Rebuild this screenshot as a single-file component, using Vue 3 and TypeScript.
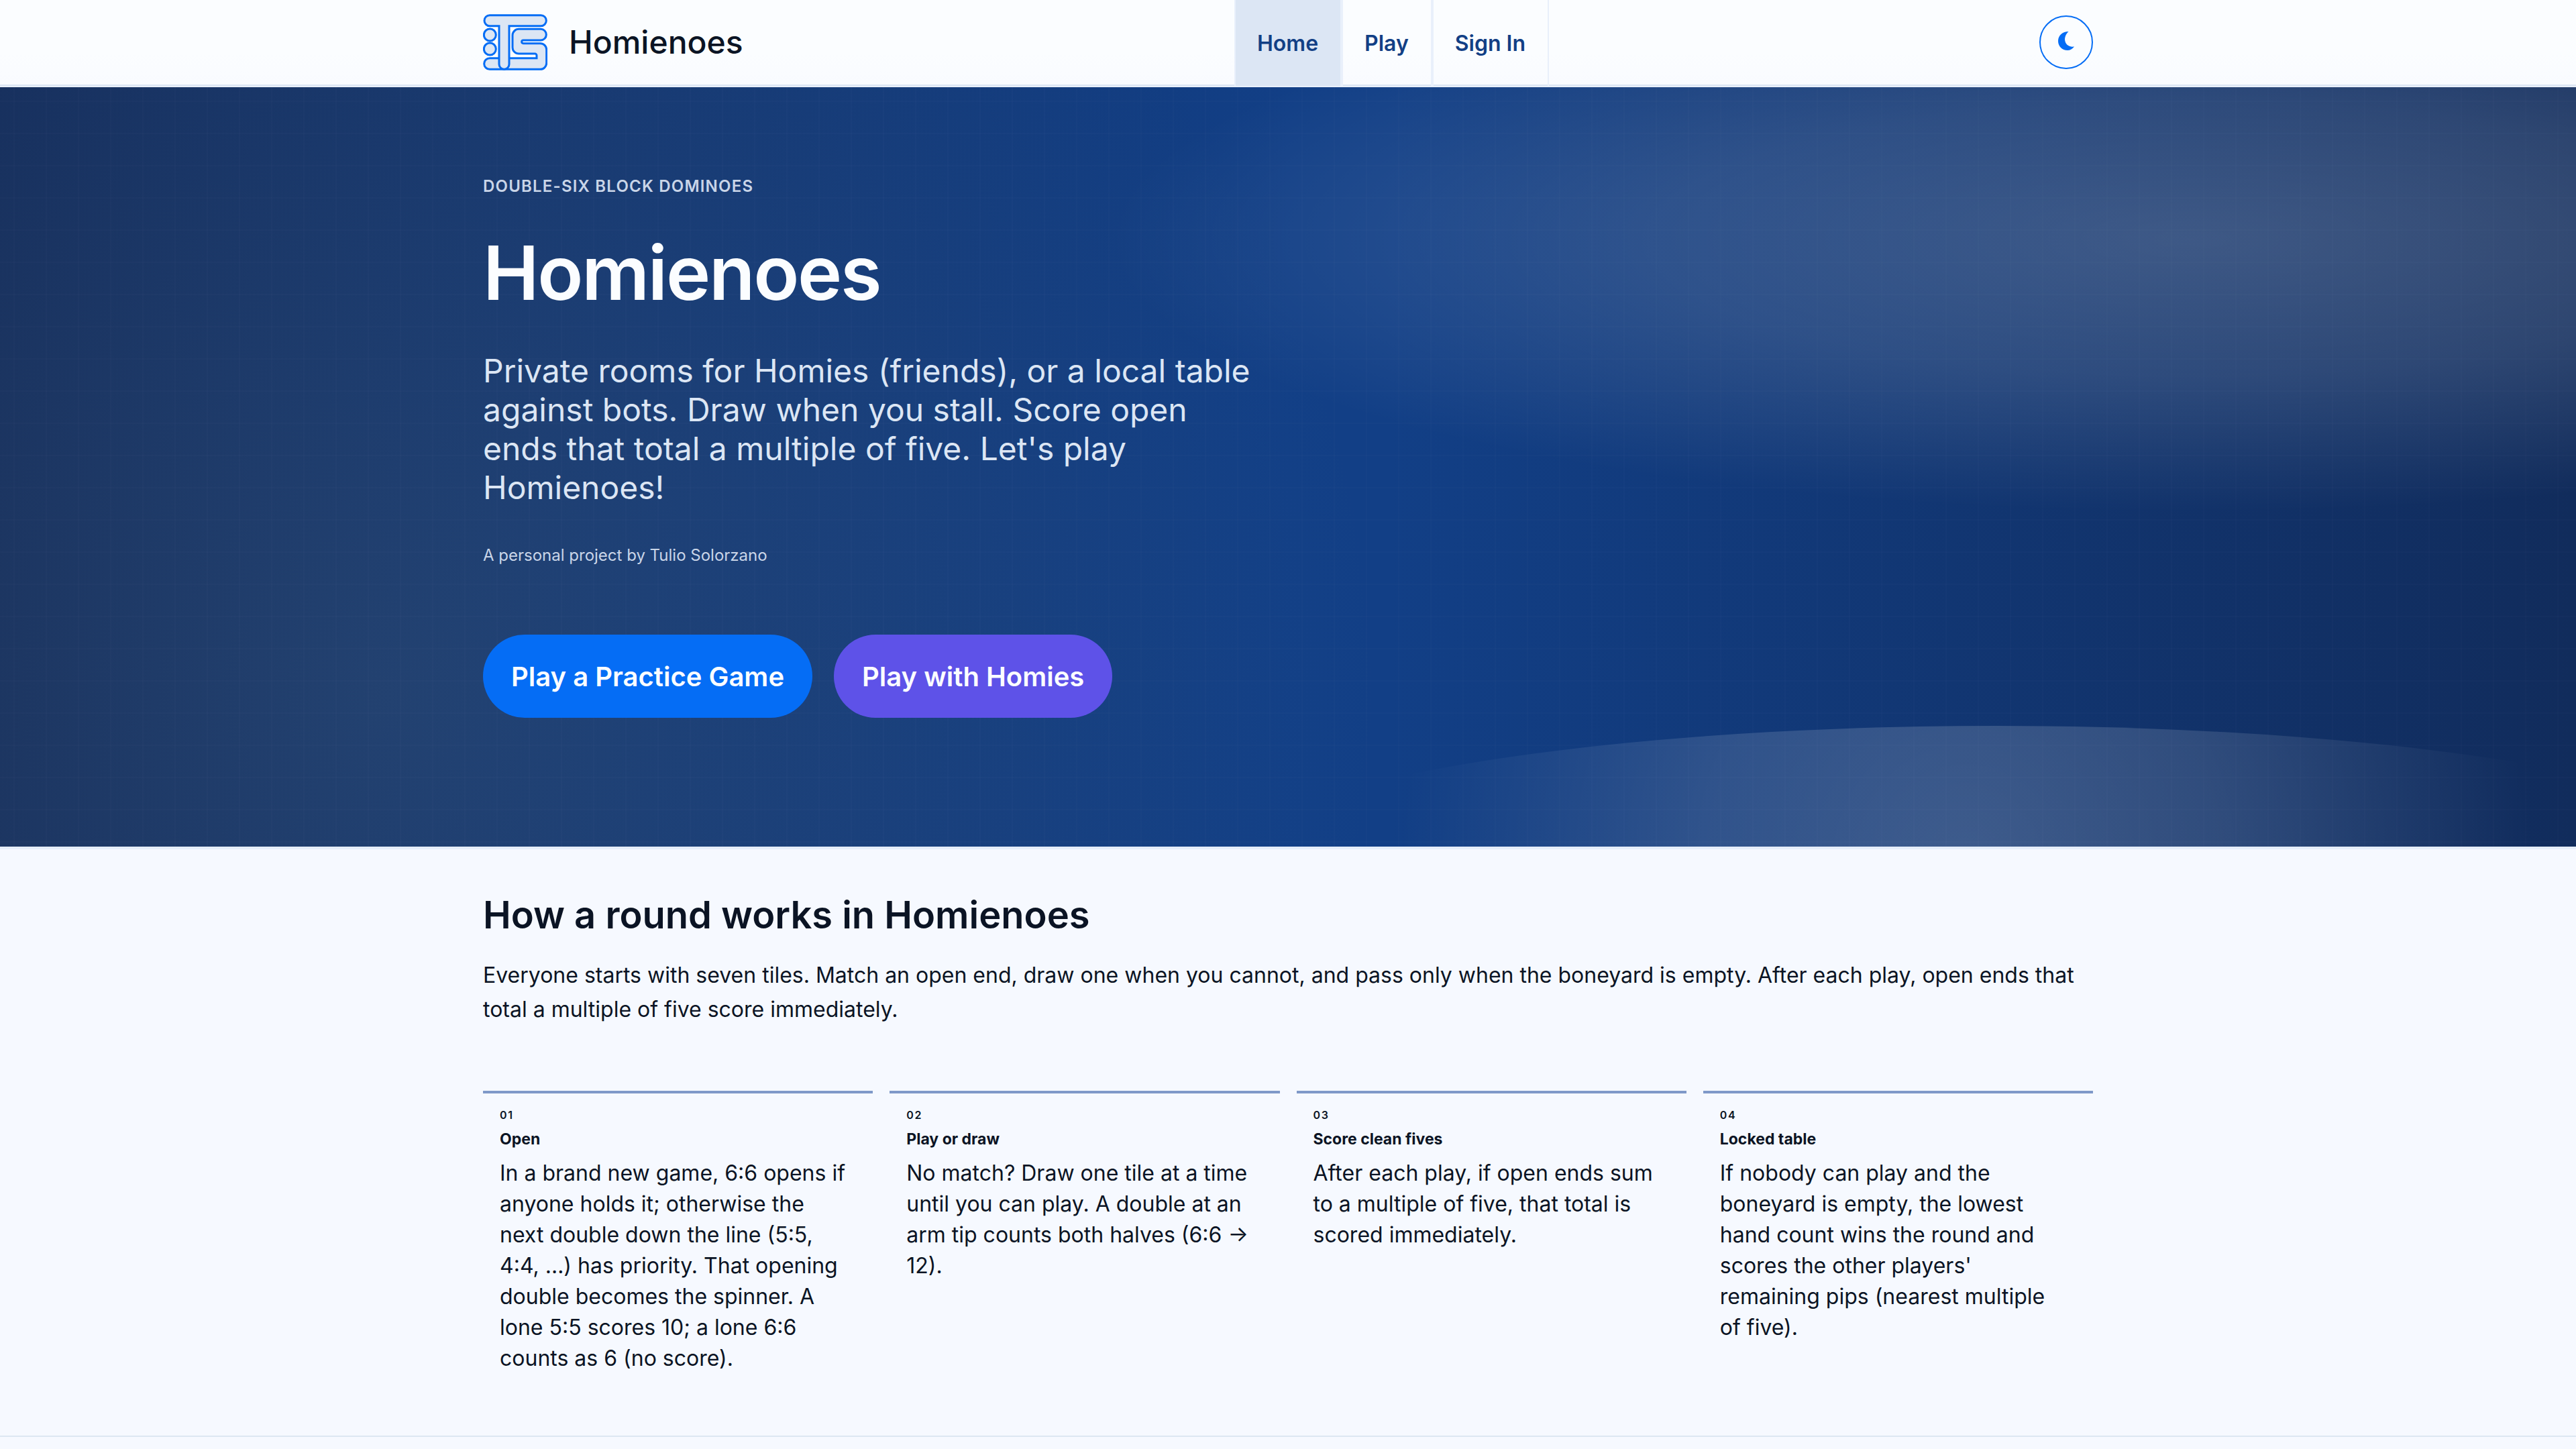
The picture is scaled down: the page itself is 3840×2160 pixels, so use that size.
<script setup lang="ts">
interface NavItem {
  label: string
  href: string
  active: boolean
}

interface Step {
  number: string
  title: string
  text: string
}

const navItems: NavItem[] = [
  { label: 'Home', href: '#home', active: true },
  { label: 'Play', href: '#play', active: false },
  { label: 'Sign In', href: '#sign-in', active: false },
]

const steps: Step[] = [
  {
    number: '01',
    title: 'Open',
    text: 'In a brand new game, 6:6 opens if anyone holds it; otherwise the next double down the line (5:5, 4:4, …) has priority. That opening double becomes the spinner. A lone 5:5 scores 10; a lone 6:6 counts as 6 (no score).',
  },
  {
    number: '02',
    title: 'Play or draw',
    text: 'No match? Draw one tile at a time until you can play. A double at an arm tip counts both halves (6:6 → 12).',
  },
  {
    number: '03',
    title: 'Score clean fives',
    text: 'After each play, if open ends sum to a multiple of five, that total is scored immediately.',
  },
  {
    number: '04',
    title: 'Locked table',
    text: "If nobody can play and the boneyard is empty, the lowest hand count wins the round and scores the other players' remaining pips (nearest multiple of five).",
  },
]
</script>

<template>
  <div class="page">
    <header class="site-header">
      <div class="container header-row">
        <a class="brand" href="#home">
          <svg class="brand-logo" viewBox="60 63 288 252" aria-hidden="true">
            <circle cx="91" cy="156" r="27" />
            <circle cx="91" cy="219" r="27" />
            <path
              d="M220 130H318a25 25 0 0 1 0 50H240a7 7 0 0 0 0 14H316a28 28 0 0 1 28 28V282a28 28 0 0 1-28 28H90a25 25 0 0 1 0-50H300V248a8 8 0 0 0-8-8H220a28 28 0 0 1-28-28V158a28 28 0 0 1 28-28z"
            />
            <path d="M90 68H319a24 24 0 0 1 0 48H177V287a22 22 0 0 1-45 0V116H90a24 24 0 0 1 0-48z" />
          </svg>
          <span class="brand-name">Homienoes</span>
        </a>
        <nav class="nav" aria-label="Main">
          <a
            v-for="item in navItems"
            :key="item.label"
            class="nav-link"
            :class="{ active: item.active }"
            :href="item.href"
            >{{ item.label }}</a
          >
        </nav>
        <button class="theme-toggle" type="button" aria-label="Switch to dark theme">
          <svg class="moon" viewBox="0 0 24 28" aria-hidden="true">
            <path d="M15.500 0A17 17 0 0 0 10 11C10 18.500 15.500 23.500 24 22.500C21.500 26 18 28 14 28C6 28 0 22 0 14C0 6 6.500 0 15.500 0z" />
          </svg>
        </button>
      </div>
    </header>

    <main>
      <section class="hero">
        <div class="hero-grid" aria-hidden="true"></div>
        <div class="hero-arc" aria-hidden="true"></div>
        <div class="container hero-content">
          <p class="eyebrow">DOUBLE-SIX BLOCK DOMINOES</p>
          <h1 class="hero-title">Homienoes</h1>
          <p class="lead">
            Private rooms for Homies (friends), or a local table against bots. Draw when you stall.
            Score open ends that total a multiple of five. Let's play Homienoes!
          </p>
          <p class="byline">A personal project by Tulio Solorzano</p>
          <div class="actions">
            <button class="btn btn-primary" type="button">Play a Practice Game</button>
            <button class="btn btn-accent" type="button">Play with Homies</button>
          </div>
        </div>
      </section>

      <section class="rules">
        <div class="container">
          <h2 class="rules-title">How a round works in Homienoes</h2>
          <p class="rules-intro">
            Everyone starts with seven tiles. Match an open end, draw one when you cannot, and pass
            only when the boneyard is empty. After each play, open ends that total a multiple of
            five score immediately.
          </p>
          <ol class="steps">
            <li v-for="step in steps" :key="step.number" class="step">
              <span class="step-number">{{ step.number }}</span>
              <h3 class="step-title">{{ step.title }}</h3>
              <p class="step-text">{{ step.text }}</p>
            </li>
          </ol>
        </div>
      </section>
    </main>
  </div>
</template>

<style>
body {
  background: #f6f9ff;
}
</style>

<style scoped>
.page {
  min-height: 100vh;
  overflow-x: hidden;
  background: #f6f9ff;
  color: #0b1424;
  font-family: Inter, 'Open Sans', sans-serif;
  font-size: 32px;
}

h1,
h2,
h3,
p,
ol {
  margin: 0;
  padding: 0;
}

.container {
  box-sizing: border-box;
  width: 100%;
  max-width: 2400px;
  margin: 0 auto;
}

.site-header {
  padding-bottom: 4px;
  background: linear-gradient(#fbfdff 60%, #f9fbff);
  box-shadow: inset 0 -2px #e9f0fb, inset 0 -4px #dce6f4;
}

.header-row {
  display: grid;
  grid-template-columns: 1120px auto 1fr;
  align-items: center;
  height: 126px;
}

.brand {
  display: flex;
  align-items: center;
  gap: 32px;
  color: inherit;
  text-decoration: none;
}

.brand-logo {
  width: 96px;
  height: 84px;
  fill: #dce6f4;
  stroke: #056df5;
  stroke-width: 9;
}

.brand-name {
  font-size: 48px;
  font-weight: 500;
  line-height: 58px;
}

.nav {
  display: flex;
  align-self: stretch;
  margin-bottom: -2px;
}

.nav-link {
  display: flex;
  align-items: center;
  padding: 0 33px 0 32px;
  border: solid #e9f0fb;
  border-width: 0 2px;
  color: #123f85;
  font-weight: 600;
  text-decoration: none;
}

.nav-link.active {
  background: #dce6f4;
}

.theme-toggle {
  display: grid;
  place-items: center;
  justify-self: end;
  width: 80px;
  height: 80px;
  padding: 0 0 4px;
  border: 2px solid #056df5;
  border-radius: 50%;
  background: transparent;
}

.moon {
  width: 24px;
  height: 28px;
  fill: #056df5;
}

.hero {
  position: relative;
  overflow: hidden;
  border-bottom: 4px solid #e6eefb;
  background:
    radial-gradient(
      ellipse 42% 36% at 85% 20%,
      rgb(255 255 255 / 19%),
      rgb(255 255 255 / 12%) 50%,
      transparent
    ),
    radial-gradient(circle at 15% 80%, rgb(132 163 162 / 14%), transparent 44%),
    linear-gradient(90deg, #132c5c, #123f86 50%, #123f86 54%, #112c5c);
}

.hero-grid {
  position: absolute;
  inset: 0;
  background:
    linear-gradient(90deg, rgb(255 255 255 / 1%) 2px, transparent 2px) 20px 20px / 48px 48px,
    linear-gradient(rgb(255 255 255 / 1%) 2px, transparent 2px) 20px 20px / 48px 48px;
}

.hero-arc {
  position: absolute;
  left: 47%;
  bottom: -252px;
  width: 61%;
  height: 432px;
  border-radius: 50%;
  background: radial-gradient(
    circle at 48% 46%,
    rgb(255 255 255 / 19%),
    rgb(255 255 255 / 13%) 31%,
    transparent 68%
  );
}

.hero-content {
  position: relative;
  padding: 130px 0 192px;
}

.eyebrow {
  color: #c9d5e8;
  font-size: 24px;
  font-weight: 600;
  line-height: 36px;
  letter-spacing: 0.05em;
}

.hero-title {
  margin: 46px 0 54px;
  color: #fbfdff;
  font-size: 112px;
  font-weight: 600;
  line-height: 128px;
  letter-spacing: -0.02em;
}

.lead {
  max-width: 1160px;
  color: #dce6f4;
  font-size: 48px;
  line-height: 58px;
}

.byline {
  margin-top: 54px;
  color: #c9d5e8;
  font-size: 24px;
  line-height: 36px;
}

.actions {
  display: flex;
  gap: 32px;
  margin-top: 100px;
}

.btn {
  height: 124px;
  padding: 0 42px;
  border: 0;
  border-radius: 62px;
  color: #fbfdff;
  font-family: inherit;
  font-size: 40px;
  font-weight: 600;
}

.btn-primary {
  background: #056df5;
}

.btn-accent {
  background: #5e52e8;
}

.rules {
  padding: 64px 0 92px;
  border-bottom: 2px solid #dde7f2;
}

.rules-title {
  font-size: 56px;
  font-weight: 600;
  line-height: 68px;
}

.rules-intro {
  margin-top: 30px;
  line-height: 51px;
}

.steps {
  display: grid;
  grid-template-columns: repeat(4, 1fr);
  gap: 25px;
  margin-top: 96px;
  list-style: none;
}

.step {
  padding: 20px 36px 0 25px;
  border-top: 4px solid #7f99c9;
}

.step-number {
  display: block;
  font-size: 16px;
  font-weight: 600;
  line-height: 24px;
  letter-spacing: 0.1em;
}

.step-title {
  margin: 8px 0 12px;
  font-size: 23px;
  font-weight: 700;
  line-height: 32px;
}

.step-text {
  line-height: 46px;
}
</style>
